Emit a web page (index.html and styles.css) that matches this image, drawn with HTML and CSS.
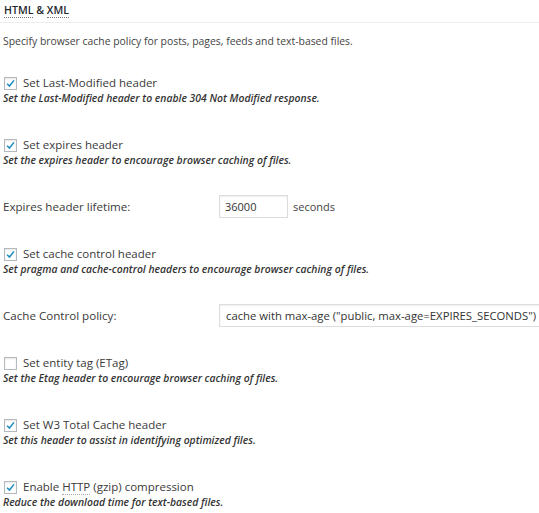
FILE: index.html
```html
<!DOCTYPE html>
<html lang="en">
<head>
  <meta charset="UTF-8" />
  <meta name="viewport" content="width=device-width, initial-scale=1" />
  <title>Browser Cache - HTML &amp; XML</title>
  <link rel="stylesheet" href="styles.css">
</head>
<body>
  <div class="settings-box">
    <h3 class="section-title"><abbr title="Hypertext Markup Language">HTML</abbr> &amp; <abbr title="eXtensible Markup Language">XML</abbr></h3>
    <p class="intro">Specify browser cache policy for posts, pages, feeds and text-based files.</p>

    <div class="form-rows">
      <div class="row row-check">
        <label class="check">
          <span class="box is-checked"><svg viewBox="0 0 12 12"><path d="M2.3 6.2 L4.9 8.8 L9.8 2.6" /></svg></span>
          <span>Set Last-Modified header</span>
        </label>
        <p class="hint">Set the Last-Modified header to enable 304 Not Modified response.</p>
      </div>

      <div class="row row-check">
        <label class="check">
          <span class="box is-checked"><svg viewBox="0 0 12 12"><path d="M2.3 6.2 L4.9 8.8 L9.8 2.6" /></svg></span>
          <span>Set expires header</span>
        </label>
        <p class="hint">Set the expires header to encourage browser caching of files.</p>
      </div>

      <div class="row row-field">
        <label class="field-label" for="lifetime">Expires header lifetime:</label>
        <input class="text-input" id="lifetime" type="text" value="36000">
        <span class="unit">seconds</span>
      </div>

      <div class="row row-check">
        <label class="check">
          <span class="box is-checked"><svg viewBox="0 0 12 12"><path d="M2.3 6.2 L4.9 8.8 L9.8 2.6" /></svg></span>
          <span>Set cache control header</span>
        </label>
        <p class="hint">Set pragma and cache-control headers to encourage browser caching of files.</p>
      </div>

      <div class="row row-field">
        <label class="field-label" for="policy">Cache Control policy:</label>
        <div class="select" id="policy">cache with max-age ("public, max-age=EXPIRES_SECONDS")</div>
      </div>

      <div class="row row-check">
        <label class="check">
          <span class="box"></span>
          <span>Set entity tag (ETag)</span>
        </label>
        <p class="hint">Set the Etag header to encourage browser caching of files.</p>
      </div>

      <div class="row row-check">
        <label class="check">
          <span class="box is-checked"><svg viewBox="0 0 12 12"><path d="M2.3 6.2 L4.9 8.8 L9.8 2.6" /></svg></span>
          <span>Set W3 Total Cache header</span>
        </label>
        <p class="hint">Set this header to assist in identifying optimized files.</p>
      </div>

      <div class="row row-check">
        <label class="check">
          <span class="box is-checked"><svg viewBox="0 0 12 12"><path d="M2.3 6.2 L4.9 8.8 L9.8 2.6" /></svg></span>
          <span>Enable <abbr title="Hypertext Transfer Protocol">HTTP</abbr> (gzip) compression</span>
        </label>
        <p class="hint">Reduce the download time for text-based files.</p>
      </div>
    </div>
  </div>
</body>
</html>
```

FILE: styles.css
```css
html, body {
  margin: 0;
  padding: 0;
  background: #ffffff;
  overflow: hidden;
}

body {
  font-family: 'Open Sans', 'Noto Sans', sans-serif;
  color: #444444;
  font-size: 11px;
}

.settings-box {
  padding: 0 0 0 3px;
}

abbr {
  text-decoration: none;
  border-bottom: 1px dotted #aaa;
}

.section-title {
  margin: 0 0 0 -3px;
  padding: 1px 0 2px 4px;
  font-size: 10.6px;
  font-weight: 600;
  line-height: 19px;
  color: #23282d;
  border-bottom: 1px solid #eeeeee;
}

.section-title abbr {
  border-bottom-color: #777;
}

.intro {
  margin: 10px 0 10px;
  line-height: 16px;
  font-size: 10.4px;
}

.row {
  display: flex;
}

.row-check {
  flex-direction: column;
  padding: 16px 0;
}

.row-field {
  align-items: center;
  padding: 12px 0;
}

.check {
  display: flex;
  align-items: center;
  gap: 6px;
  font-size: 11.5px;
  line-height: 16px;
  color: #3a3a3a;
  padding-left: 1px;
}

.box {
  width: 11px;
  height: 11px;
  border: 1px solid #b4b9be;
  background: #fff;
  box-shadow: inset 0 1px 2px rgba(0, 0, 0, 0.1);
  flex: none;
  display: flex;
}

.box svg {
  width: 11px;
  height: 11px;
}

.box path {
  fill: none;
  stroke: #1e8cbe;
  stroke-width: 1.7;
}

.hint {
  margin: 0;
  font-size: 10.4px;
  line-height: 14px;
  font-style: italic;
  font-weight: 600;
  color: #333;
}

.field-label {
  width: 216px;
  flex: none;
  font-size: 11.6px;
  color: #3a3a3a;
}

.text-input {
  width: 69px;
  height: 23px;
  box-sizing: border-box;
  border: 1px solid #dddddd;
  box-shadow: inset 0 1px 2px rgba(0, 0, 0, 0.07);
  font-family: inherit;
  font-size: 11px;
  color: #333;
  padding: 0 5px;
  margin: 0;
  outline: none;
}

.unit {
  margin-left: 5px;
  font-size: 11px;
}

.select {
  flex: none;
  width: 340px;
  height: 23px;
  box-sizing: border-box;
  border: 1px solid #dddddd;
  box-shadow: inset 0 1px 2px rgba(0, 0, 0, 0.07);
  padding: 0 6px;
  line-height: 21px;
  font-size: 11.3px;
  color: #333;
  white-space: nowrap;
}
```
